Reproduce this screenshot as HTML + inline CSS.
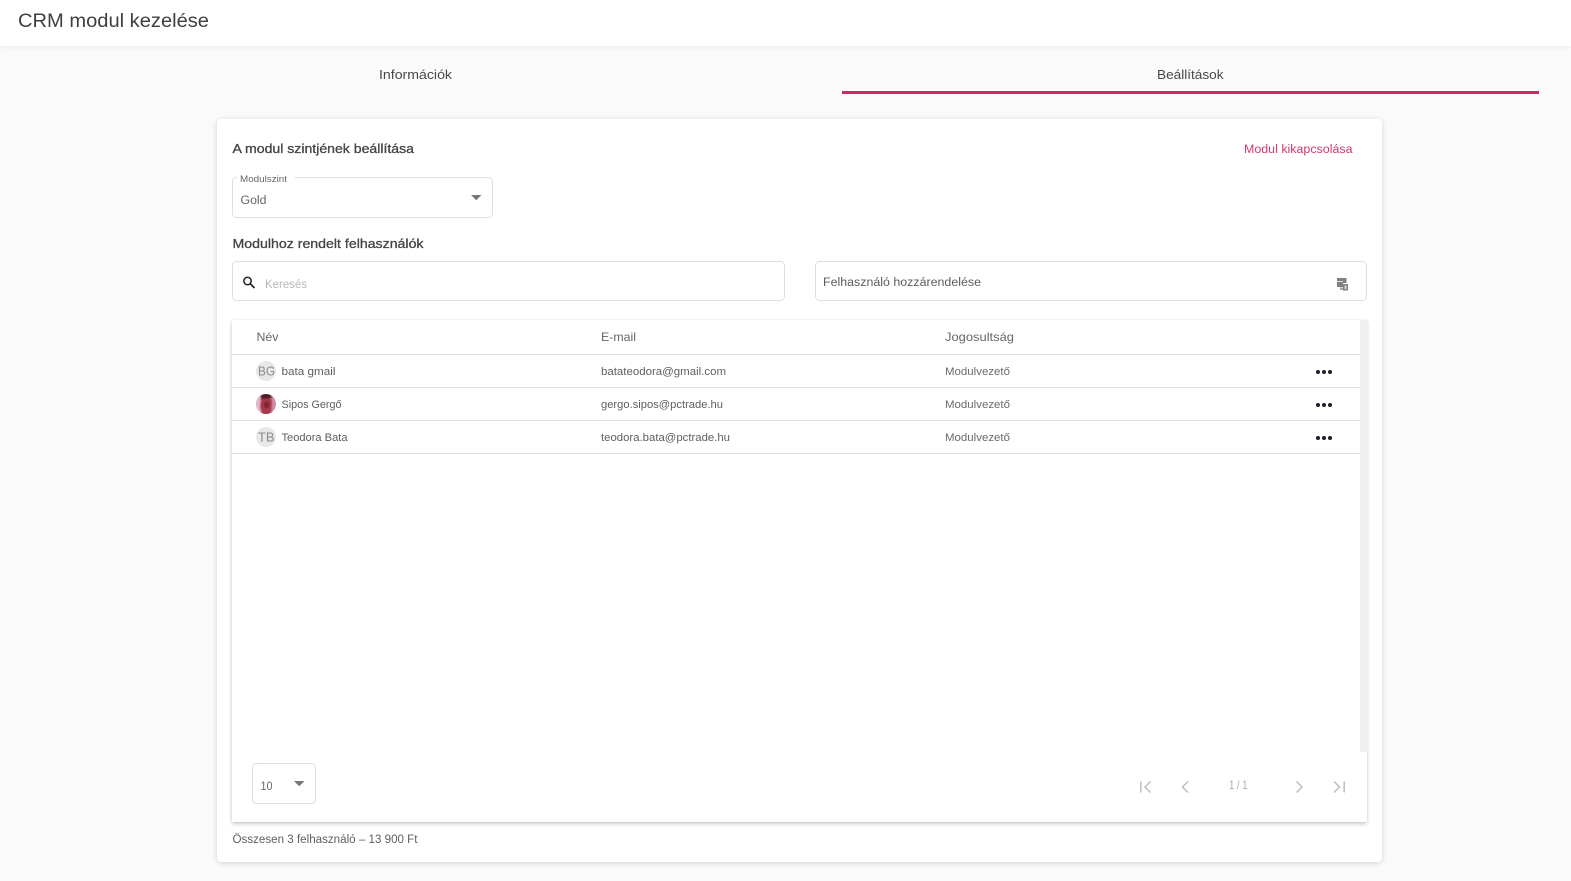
<!DOCTYPE html>
<html lang="hu">
<head>
<meta charset="utf-8">
<title>CRM modul kezelése</title>
<style>
html,body{margin:0;padding:0;width:1571px;height:881px;overflow:hidden;background:#fafafa}
body{position:relative;font-family:"Liberation Sans",sans-serif}
.abs{position:absolute;box-sizing:border-box}
#hdr{left:0;top:0;width:1571px;height:46px;background:#fff;box-shadow:0 1px 4px rgba(0,0,0,.07)}
#card{left:217px;top:119px;width:1165px;height:743px;background:#fff;border-radius:4px;box-shadow:0 1px 6px rgba(0,0,0,.16)}
#tbl{left:232px;top:320px;width:1135px;height:502px;background:#fff;box-shadow:0 2px 4px rgba(0,0,0,.2),0 0 2px rgba(0,0,0,.08)}
svg{position:absolute;left:0;top:0}
text{font-family:"Liberation Sans",sans-serif}
.m{stroke:#444;stroke-width:.3px}
</style>
</head>
<body>
<div class="abs" id="hdr"></div>
<div class="abs" id="card"></div>
<div class="abs" id="tbl"></div>
<svg width="1571" height="881" viewBox="0 0 1571 881" xmlns="http://www.w3.org/2000/svg">
  <!-- header & tabs -->
  <text x="18" y="27" font-size="19.5" fill="#3f3f3f" textLength="191" lengthAdjust="spacingAndGlyphs">CRM modul kezelése</text>
  <text x="379" y="79" font-size="13" fill="#484848" textLength="73" lengthAdjust="spacingAndGlyphs">Információk</text>
  <text x="1157" y="79" font-size="13" fill="#484848" textLength="66.5" lengthAdjust="spacingAndGlyphs">Beállítások</text>
  <rect x="842" y="91" width="697" height="3" fill="#d02a64"/>

  <!-- section 1 -->
  <text class="m" x="232.500" y="153" font-size="13" fill="#444" textLength="181.500" lengthAdjust="spacingAndGlyphs">A modul szintjének beállítása</text>
  <text x="1244" y="153" font-size="11.500" fill="#d5376f" textLength="108.500" lengthAdjust="spacingAndGlyphs">Modul kikapcsolása</text>

  <rect x="232.500" y="177.500" width="260" height="40" rx="4" fill="#fff" stroke="#dfdfdf"/>
  <rect x="237" y="175" width="58" height="5" fill="#fff"/>
  <text x="240" y="182" font-size="9" fill="#666" textLength="47" lengthAdjust="spacingAndGlyphs">Modulszint</text>
  <text x="240.500" y="204" font-size="11.500" fill="#666" textLength="26" lengthAdjust="spacingAndGlyphs">Gold</text>
  <path d="M471 195h10.500l-5.250 5.200z" fill="#777"/>

  <!-- section 2 -->
  <text class="m" x="232.500" y="248" font-size="13" fill="#444" textLength="191" lengthAdjust="spacingAndGlyphs">Modulhoz rendelt felhasználók</text>

  <rect x="232.500" y="261.500" width="552" height="39" rx="4" fill="#fff" stroke="#dfdfdf"/>
  <circle cx="247.500" cy="281" r="3.700" fill="none" stroke="#222" stroke-width="1.500"/>
  <path d="M250.300 283.800l4.200 4.200" stroke="#222" stroke-width="1.700"/>
  <text x="265" y="288" font-size="11.500" fill="#b8b8b8" textLength="42" lengthAdjust="spacingAndGlyphs">Keresés</text>

  <rect x="815.500" y="261.500" width="551" height="39" rx="4" fill="#fff" stroke="#dfdfdf"/>
  <text x="823" y="286" font-size="11.500" fill="#5c5c5c" textLength="158" lengthAdjust="spacingAndGlyphs">Felhasználó hozzárendelése</text>
  <path d="M1337 278h9.500v5h-3.500v4h-6z" fill="#808080"/>
  <rect x="1337" y="281" width="6" height="1" fill="#ddd"/>
  <rect x="1343" y="284" width="5" height="6.500" fill="#808080"/>
  <rect x="1340" y="287.500" width="3" height="2.500" fill="#a8a8a8"/>
  <rect x="1344.700" y="285.500" width="1.600" height="3.500" fill="#e8e8e8"/>

  <!-- scrollbar -->
  <rect x="1360" y="320" width="8" height="432" fill="#efefef"/>

  <!-- table header -->
  <text x="256.500" y="341" font-size="12" fill="#666" textLength="22" lengthAdjust="spacingAndGlyphs">Név</text>
  <text x="601" y="341" font-size="12" fill="#666" textLength="35" lengthAdjust="spacingAndGlyphs">E-mail</text>
  <text x="945" y="341" font-size="12" fill="#666" textLength="69" lengthAdjust="spacingAndGlyphs">Jogosultság</text>

  <g fill="#dfdfdf">
    <rect x="232" y="354" width="1128" height="1"/>
    <rect x="232" y="387" width="1128" height="1"/>
    <rect x="232" y="420" width="1128" height="1"/>
    <rect x="232" y="453" width="1128" height="1"/>
  </g>

  <!-- rows -->
  <circle cx="266" cy="371" r="10" fill="#e8e8e8"/>
  <text x="258" y="375.500" font-size="12.500" fill="#8a8a8a" textLength="17" lengthAdjust="spacingAndGlyphs">BG</text>
  <text x="281.500" y="375" font-size="11" fill="#5e5e5e" textLength="54" lengthAdjust="spacingAndGlyphs">bata gmail</text>
  <text x="601" y="375" font-size="11" fill="#5e5e5e" textLength="125" lengthAdjust="spacingAndGlyphs">batateodora@gmail.com</text>
  <text x="945" y="375" font-size="11" fill="#6a6a6a" textLength="65" lengthAdjust="spacingAndGlyphs">Modulvezető</text>

  <defs>
    <clipPath id="av"><circle cx="266" cy="404" r="10"/></clipPath>
    <filter id="bl"><feGaussianBlur stdDeviation="0.7"/></filter>
  </defs>
  <g clip-path="url(#av)">
    <rect x="256" y="394" width="20" height="20" fill="#d58aa8"/>
    <g filter="url(#bl)">
      <rect x="255" y="394" width="6" height="20" fill="#e2b8ca"/>
      <path d="M261 396h8l3 5-1 14h-9l-2-8z" fill="#a8384a"/>
      <path d="M260 393h10l2 5-11 1z" fill="#4a1c28"/>
      <path d="M264 402h5v5l-3 2-2-3z" fill="#7f2233"/>
    </g>
  </g>
  <text x="281.500" y="408" font-size="11" fill="#5e5e5e" textLength="60" lengthAdjust="spacingAndGlyphs">Sipos Gergő</text>
  <text x="601" y="408" font-size="11" fill="#5e5e5e" textLength="122" lengthAdjust="spacingAndGlyphs">gergo.sipos@pctrade.hu</text>
  <text x="945" y="408" font-size="11" fill="#6a6a6a" textLength="65" lengthAdjust="spacingAndGlyphs">Modulvezető</text>

  <circle cx="266" cy="437" r="10" fill="#e8e8e8"/>
  <text x="258" y="441.500" font-size="12.500" fill="#8a8a8a" textLength="16.500" lengthAdjust="spacingAndGlyphs">TB</text>
  <text x="281.500" y="441" font-size="11" fill="#5e5e5e" textLength="66" lengthAdjust="spacingAndGlyphs">Teodora Bata</text>
  <text x="601" y="441" font-size="11" fill="#5e5e5e" textLength="129" lengthAdjust="spacingAndGlyphs">teodora.bata@pctrade.hu</text>
  <text x="945" y="441" font-size="11" fill="#6a6a6a" textLength="65" lengthAdjust="spacingAndGlyphs">Modulvezető</text>

  <g fill="#1d1d2b">
    <circle cx="1318" cy="372" r="2"/><circle cx="1324" cy="372" r="2"/><circle cx="1330" cy="372" r="2"/>
    <circle cx="1318" cy="405" r="2"/><circle cx="1324" cy="405" r="2"/><circle cx="1330" cy="405" r="2"/>
    <circle cx="1318" cy="438" r="2"/><circle cx="1324" cy="438" r="2"/><circle cx="1330" cy="438" r="2"/>
  </g>

  <!-- page size -->
  <rect x="252.500" y="763.500" width="63" height="40" rx="4" fill="#fff" stroke="#dfdfdf"/>
  <text x="260.500" y="790" font-size="12" fill="#666" textLength="12" lengthAdjust="spacingAndGlyphs">10</text>
  <path d="M294 781h10.500l-5.250 5.200z" fill="#777"/>

  <!-- pagination -->
  <g fill="none" stroke="#bdbdbd" stroke-width="1.500">
    <path d="M1140.800 781.500v11"/>
    <path d="M1150.500 781.500l-5.500 5.500 5.500 5.500"/>
    <path d="M1188 781.500l-5.500 5.500 5.500 5.500"/>
    <path d="M1296.500 781.500l5.500 5.500-5.500 5.500"/>
    <path d="M1334 781.500l5.500 5.500-5.500 5.500"/>
    <path d="M1344.200 781.500v11"/>
  </g>
  <text x="1229" y="789" font-size="12" fill="#aaa" textLength="18.500" lengthAdjust="spacingAndGlyphs">1 / 1</text>

  <!-- footer -->
  <text x="232.500" y="843" font-size="11.500" fill="#5e5e5e" textLength="185" lengthAdjust="spacingAndGlyphs">Összesen 3 felhasználó – 13 900 Ft</text>
</svg>
</body>
</html>
